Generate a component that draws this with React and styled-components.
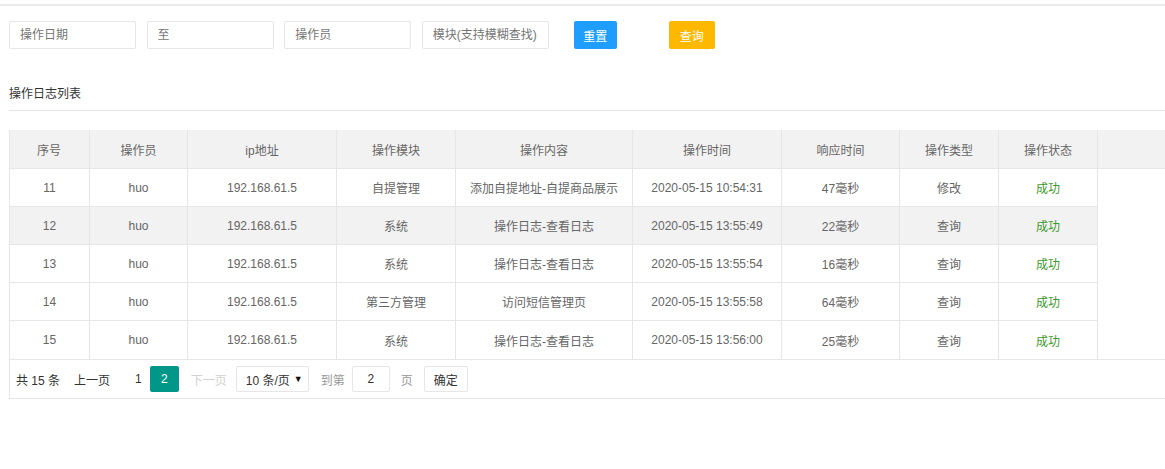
import styled, { createGlobalStyle } from 'styled-components';

const GlobalStyle = createGlobalStyle`
  html, body {
    margin: 0;
    padding: 0;
    background: #ffffff;
    overflow: hidden;
  }
  body {
    font-family: "Liberation Sans", "Noto Sans CJK SC", sans-serif;
    font-size: 12px;
    color: #666;
  }
  * { box-sizing: border-box; }
`;

const COLS = '80px 98px 149px 119px 177px 149px 118px 99px 99px';

const columns = ['序号', '操作员', 'ip地址', '操作模块', '操作内容', '操作时间', '响应时间', '操作类型', '操作状态'];

const logs = [
  { id: 11, user: 'huo', ip: '192.168.61.5', module: '自提管理', content: '添加自提地址-自提商品展示', time: '2020-05-15 10:54:31', cost: '47毫秒', type: '修改' },
  { id: 12, user: 'huo', ip: '192.168.61.5', module: '系统', content: '操作日志-查看日志', time: '2020-05-15 13:55:49', cost: '22毫秒', type: '查询', hover: true },
  { id: 13, user: 'huo', ip: '192.168.61.5', module: '系统', content: '操作日志-查看日志', time: '2020-05-15 13:55:54', cost: '16毫秒', type: '查询' },
  { id: 14, user: 'huo', ip: '192.168.61.5', module: '第三方管理', content: '访问短信管理页', time: '2020-05-15 13:55:58', cost: '64毫秒', type: '查询' },
  { id: 15, user: 'huo', ip: '192.168.61.5', module: '系统', content: '操作日志-查看日志', time: '2020-05-15 13:56:00', cost: '25毫秒', type: '查询' },
];

function App() {
  return (
    <Page>
      <GlobalStyle />
      <TopRule />
      <SearchBar>
        <Field placeholder="操作日期" />
        <Field placeholder="至" />
        <Field placeholder="操作员" />
        <Field placeholder="模块(支持模糊查找)" />
        <ActionButton $color="#1E9FFF" $gap="25px" $width="43px">重置</ActionButton>
        <ActionButton $color="#FFB800" $gap="52px" $width="46px">查询</ActionButton>
      </SearchBar>
      <SectionTitle>操作日志列表</SectionTitle>
      <TableBox>
        <HeadRow>
          {columns.map((c) => (
            <HeadCell key={c}>{c}</HeadCell>
          ))}
          <HeadCell />
        </HeadRow>
        <Body>
          {logs.map((log, i) => (
            <BodyRow key={log.id} $hover={log.hover} $last={i === logs.length - 1}>
              <Cell>{log.id}</Cell>
              <Cell>{log.user}</Cell>
              <Cell>{log.ip}</Cell>
              <Cell>{log.module}</Cell>
              <Cell>{log.content}</Cell>
              <Cell>{log.time}</Cell>
              <Cell>{log.cost}</Cell>
              <Cell>{log.type}</Cell>
              <Cell><Success>成功</Success></Cell>
            </BodyRow>
          ))}
        </Body>
        <Pager>
          <PagerText $ml="0">共 15 条</PagerText>
          <PagerText $ml="14px" $color="#333">上一页</PagerText>
          <PagerText $ml="25px" $color="#333">1</PagerText>
          <PageCurrent>2</PageCurrent>
          <PagerText $ml="12px" $color="#d2d2d2">下一页</PagerText>
          <PageSize>
            10 条/页 <Caret>▼</Caret>
          </PageSize>
          <PagerText $ml="12px" $color="#999">到第</PagerText>
          <JumpInput defaultValue="2" />
          <PagerText $ml="11px" $color="#999">页</PagerText>
          <ConfirmButton>确定</ConfirmButton>
        </Pager>
      </TableBox>
    </Page>
  );
}

export default App;

const Page = styled.div`
  width: 1165px;
  min-height: 469px;
`;

const TopRule = styled.div`
  margin-top: 4px;
  border-top: 2px solid #ececec;
`;

const SearchBar = styled.div`
  display: flex;
  align-items: center;
  gap: 10.6px;
  padding: 15px 0 0 9px;
`;

const Field = styled.input`
  width: 127px;
  height: 28px;
  border: 1px solid #e6e6e6;
  border-radius: 2px;
  padding: 0 10px;
  font: inherit;
  font-size: 12px;
  color: #333;
  outline: none;

  &::placeholder {
    color: #757575;
  }
`;

const ActionButton = styled.button`
  width: ${(p) => p.$width};
  height: 28px;
  padding: 0;
  margin-left: ${(p) => `calc(${p.$gap} - 10.6px)`};
  border: none;
  border-radius: 2px;
  background: ${(p) => p.$color};
  color: #fff;
  font: inherit;
  font-size: 12px;
  cursor: pointer;
`;

const SectionTitle = styled.h2`
  margin: 37px 0 0 9px;
  padding-bottom: 8px;
  border-bottom: 1px solid #e6e6e6;
  font-size: 12px;
  font-weight: 400;
  line-height: 16px;
  color: #333;
`;

const TableBox = styled.div`
  margin: 19px 0 0 9px;
  width: 1160px;
  border: 1px solid #e6e6e6;
  border-top: none;
`;

const HeadRow = styled.div`
  display: grid;
  grid-template-columns: ${COLS} 1fr;
  height: 39px;
  background: #f2f2f2;
  border-bottom: 1px solid #e6e6e6;
`;

const HeadCell = styled.div`
  display: flex;
  align-items: center;
  justify-content: center;
  border-right: 1px solid #e6e6e6;
  color: #666;

  &:first-child {
    margin-left: -1px;
  }
`;

const Body = styled.div`
  border-bottom: 1px solid #e6e6e6;
`;

const BodyRow = styled.div`
  display: grid;
  grid-template-columns: ${COLS};
  width: 1088px;
  height: 38px;
  background: ${(p) => (p.$hover ? '#f2f2f2' : '#fff')};
  border-bottom: ${(p) => (p.$last ? 'none' : '1px solid #e6e6e6')};
`;

const Cell = styled.div`
  display: flex;
  align-items: center;
  justify-content: center;
  border-right: 1px solid #e6e6e6;
  white-space: nowrap;
  color: #666;
`;

const Success = styled.span`
  color: #3a9a2a;
`;

const Pager = styled.div`
  display: flex;
  align-items: center;
  height: 38px;
  padding-left: 6px;
`;

const PagerText = styled.span`
  margin-left: ${(p) => p.$ml};
  color: ${(p) => p.$color || '#333'};
`;

const PageCurrent = styled.span`
  display: flex;
  align-items: center;
  justify-content: center;
  width: 29px;
  height: 26px;
  margin-left: 8px;
  border-radius: 2px;
  background: #009688;
  color: #fff;
`;

const PageSize = styled.span`
  display: flex;
  align-items: center;
  justify-content: space-between;
  width: 73px;
  height: 26px;
  margin-left: 9px;
  padding: 0 5px 0 9px;
  border: 1px solid #e6e6e6;
  border-radius: 2px;
  color: #333;
`;

const Caret = styled.span`
  font-size: 9px;
  color: #111;
`;

const JumpInput = styled.input`
  width: 38px;
  height: 26px;
  margin-left: 7px;
  border: 1px solid #e6e6e6;
  border-radius: 2px;
  text-align: center;
  font: inherit;
  font-size: 12px;
  color: #333;
  outline: none;
`;

const ConfirmButton = styled.button`
  width: 44px;
  height: 26px;
  margin-left: 11px;
  border: 1px solid #e6e6e6;
  border-radius: 2px;
  background: #fff;
  font: inherit;
  font-size: 12px;
  color: #333;
  cursor: pointer;
`;
